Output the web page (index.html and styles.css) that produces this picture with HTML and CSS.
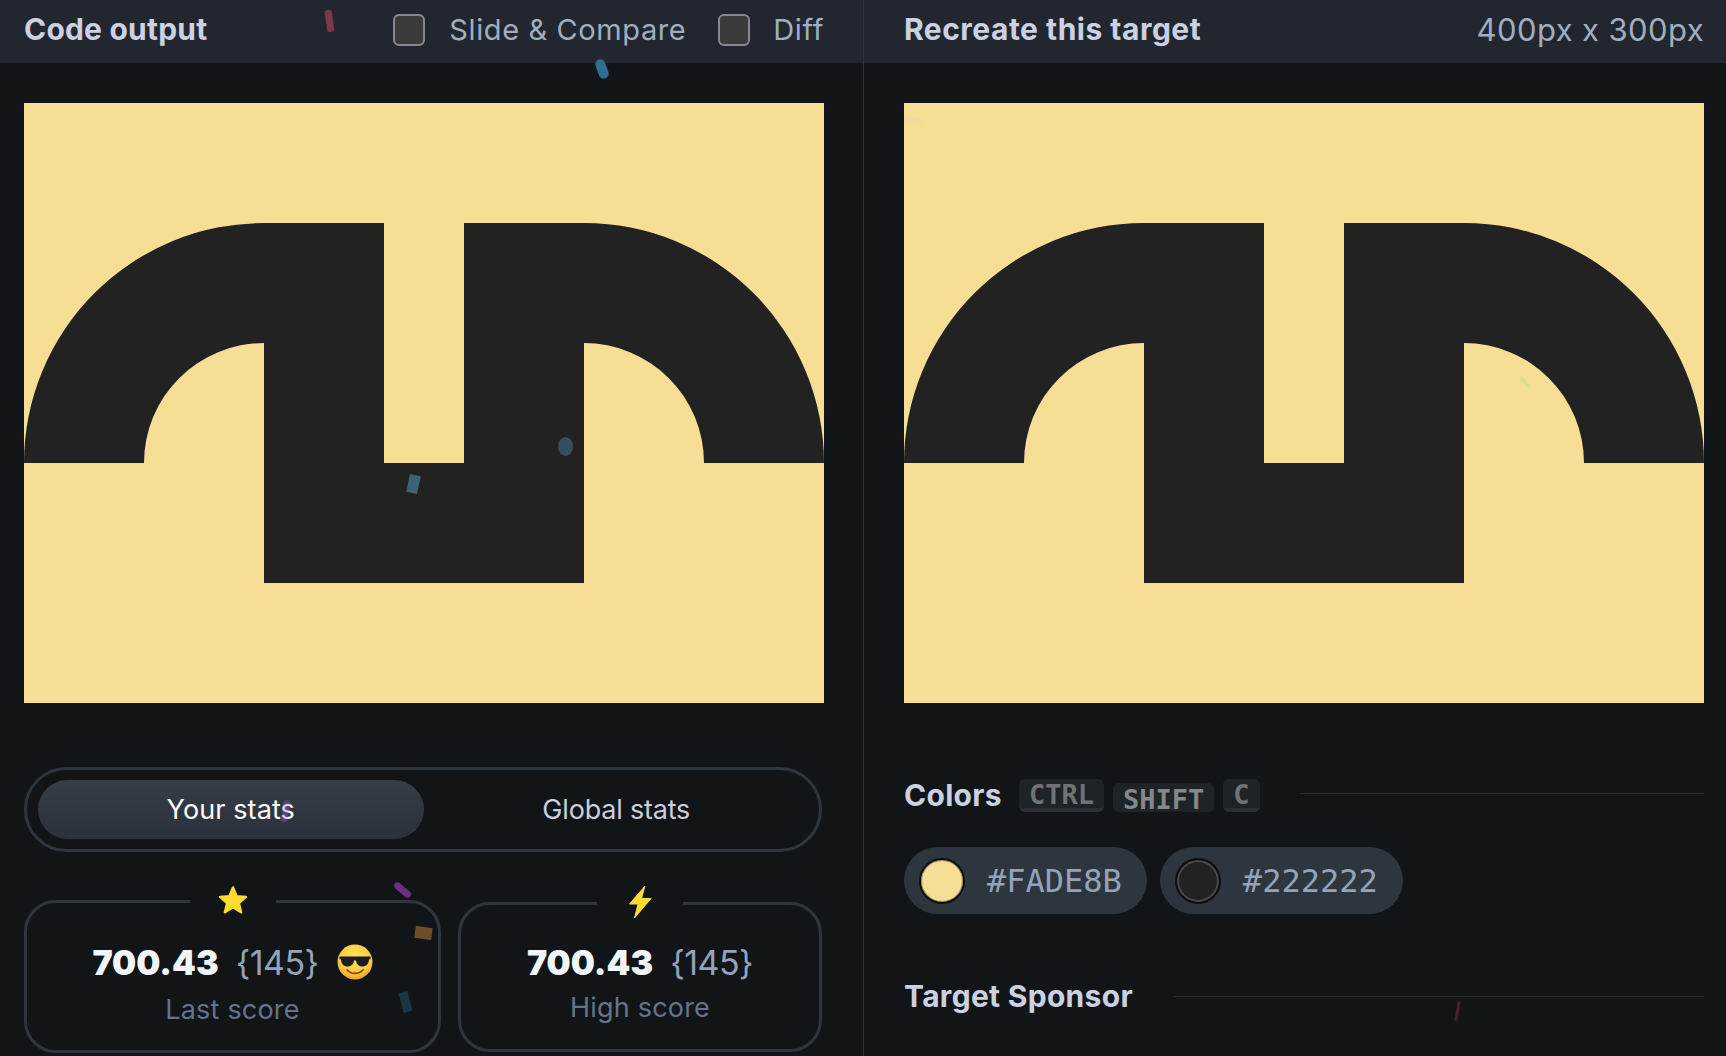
FILE: index.html
```html
<!DOCTYPE html>
<html lang="en">
<head>
    <meta charset="UTF-8">
    <meta name="viewport" content="width=device-width, initial-scale=1.0">
    <title>Code output</title>
    <link rel="stylesheet" href="styles.css">
</head>
<body>

    <div class="page">
        <section class="panel panel-left">
            <header class="bar">
                <h2 class="bar-title">Code output</h2>
                <div class="bar-options">
                    <span class="check"></span>
                    <span class="bar-label label-slide">Slide &amp; Compare</span>
                    <span class="check check-diff"></span>
                    <span class="bar-label label-diff">Diff</span>
                </div>
            </header>

            <div class="canvas">
                <svg viewBox="0 0 400 300" width="800" height="600">
                    <rect width="400" height="300" fill="#f6df94"/>
                    <path fill="#222222" d="M0 180A120 120 0 0 1 120 60H180V180H220V60H280A120 120 0 0 1 400 180H340A60 60 0 0 0 280 120V240H120V120A60 60 0 0 0 60 180Z"/>
                </svg>
            </div>

            <div class="toggle">
                <button class="tab tab-active">Your stats</button>
                <button class="tab">Global stats</button>
            </div>

            <div class="cards">
                <div class="card card-last">
                    <span class="card-icon">
                        <svg viewBox="0 0 32 32" width="32" height="32">
                            <path fill="#fcdb32" stroke="#fcdb32" stroke-width="2.5" stroke-linejoin="round" d="M16 3.5L19.6 12.2L29 12.9L21.8 19L24.1 28.2L16 23.2L7.9 28.2L10.2 19L3 12.9L12.4 12.2Z"/>
                        </svg>
                    </span>
                    <div class="score">
                        <strong class="score-value">700.43</strong>
                        <span class="score-count">{145}</span>
                        <svg class="emoji" viewBox="0 0 36 36" width="36" height="36">
                            <defs>
                                <radialGradient id="face" cx="50%" cy="35%" r="70%">
                                    <stop offset="0" stop-color="#ffe566"/>
                                    <stop offset="0.65" stop-color="#fcc93f"/>
                                    <stop offset="1" stop-color="#ee9a28"/>
                                </radialGradient>
                            </defs>
                            <circle cx="18" cy="18" r="17.5" fill="url(#face)"/>
                            <path fill="#1d1d1f" d="M2.5 12.5H33.5V15L32 15.5C31.5 20.5 29 22.5 25.5 22.5C21.5 22.5 19.5 20 19 16.5H17C16.5 20 14.5 22.5 10.5 22.5C7 22.5 4.5 20.5 4 15.5L2.5 15Z"/>
                            <path fill="none" stroke="#7c4a12" stroke-width="1.8" stroke-linecap="round" d="M10 26C14 30.5 22 30.5 26 26"/>
                        </svg>
                    </div>
                    <p class="score-label">Last score</p>
                </div>

                <div class="card card-high">
                    <span class="card-icon">
                        <svg viewBox="0 0 24 34" width="24" height="34">
                            <path fill="#fcdb32" stroke="#fcdb32" stroke-width="1" stroke-linejoin="round" d="M17 1L1.5 19H10L6.5 33L23 13.5H13.5Z"/>
                        </svg>
                    </span>
                    <div class="score">
                        <strong class="score-value">700.43</strong>
                        <span class="score-count">{145}</span>
                    </div>
                    <p class="score-label">High score</p>
                </div>
            </div>
        </section>

        <section class="panel panel-right">
            <header class="bar">
                <h2 class="bar-title">Recreate this target</h2>
                <span class="bar-label label-size">400px x 300px</span>
            </header>

            <div class="canvas">
                <svg viewBox="0 0 400 300" width="800" height="600">
                    <rect width="400" height="300" fill="#f6df94"/>
                    <path fill="#222222" d="M0 180A120 120 0 0 1 120 60H180V180H220V60H280A120 120 0 0 1 400 180H340A60 60 0 0 0 280 120V240H120V120A60 60 0 0 0 60 180Z"/>
                </svg>
            </div>

            <div class="heading heading-colors">
                <h3>Colors</h3>
                <div class="keys">
                    <kbd class="key">CTRL</kbd>
                    <kbd class="key key-shift">SHIFT</kbd>
                    <kbd class="key">C</kbd>
                </div>
                <span class="heading-line"></span>
            </div>

            <div class="chips">
                <div class="chip">
                    <span class="swatch swatch-yellow"></span>
                    <span class="chip-text">#FADE8B</span>
                </div>
                <div class="chip">
                    <span class="swatch swatch-dark"></span>
                    <span class="chip-text">#222222</span>
                </div>
            </div>

            <div class="heading heading-sponsor">
                <h3>Target Sponsor</h3>
                <span class="heading-line"></span>
            </div>
        </section>

        <!-- confetti -->
        <span class="bit bit-1"></span>
        <span class="bit bit-2"></span>
        <span class="bit bit-3"></span>
        <span class="bit bit-4"></span>
        <span class="bit bit-5"></span>
        <span class="bit bit-6"></span>
        <span class="bit bit-7"></span>
        <span class="bit bit-8"></span>
        <span class="bit bit-9"></span>
        <span class="bit bit-10"></span>
        <span class="bit bit-11"></span>
    </div>

</body>
</html>
```

FILE: styles.css
```css
* {
    box-sizing: border-box;
}
body {
    margin: 0;
    background-color: #111518;
    font-family: Inter, "Open Sans", sans-serif;
    overflow: hidden;
}
h2, h3, p {
    margin: 0;
}
.page {
    position: relative;
    display: grid;
    grid-template-columns: 863px 863px;
    height: 1056px;
    overflow: hidden;
}
.panel {
    min-width: 0;
}
.panel-right {
    border-left: 1px solid #2d343b;
}
.bar {
    display: flex;
    align-items: center;
    justify-content: space-between;
    height: 63px;
    padding: 0 22px 3px 24px;
    background-color: #22272f;
}
.panel-left .bar {
    padding-right: 39px;
}
.panel-right .bar {
    padding-left: 40px;
}
.bar-title {
    margin-bottom: 2px;
    color: #ccd1e2;
    font-size: 30px;
    font-weight: 700;
    letter-spacing: 0.2px;
}
.panel-right .bar-title {
    letter-spacing: 0.5px;
}
.bar-label {
    margin-bottom: 2px;
    color: #a0aec0;
    font-size: 29px;
    letter-spacing: 0.6px;
}
.label-size {
    font-size: 31px;
    letter-spacing: 0.4px;
}
.bar-options {
    display: flex;
    align-items: center;
}
.check {
    width: 32px;
    height: 32px;
    background-color: #3b3b3b;
    border: 2px solid #85898d;
    border-radius: 6px;
}
.label-slide {
    margin-left: 24px;
    margin-right: 32px;
}
.label-diff {
    margin-left: 23px;
}
.canvas {
    width: 800px;
    height: 600px;
    margin: 40px 0 0 24px;
}
.panel-right .canvas {
    margin-left: 40px;
}
.canvas svg {
    display: block;
}
.toggle {
    display: grid;
    grid-template-columns: 1fr 1fr;
    width: 798px;
    height: 85px;
    margin: 64px 0 0 24px;
    padding: 10px 10px 10px 11px;
    border: 3px solid #2d363f;
    border-radius: 43px;
}
.tab {
    border: none;
    border-radius: 30px;
    background: none;
    color: #c9cfdf;
    font-family: Inter, sans-serif;
    font-size: 27px;
    letter-spacing: -0.2px;
}
.tab-active {
    background: linear-gradient(#363d47, #2b313a);
    color: #ffffff;
    letter-spacing: 0.1px;
}
.cards {
    display: grid;
    grid-template-columns: 417px 364px;
    gap: 17px;
    align-items: start;
    margin: 48px 0 0 24px;
}
.card {
    position: relative;
    border: 3px solid #2d363f;
    border-radius: 32px;
    text-align: center;
}
.card-last {
    height: 153px;
    padding-top: 37px;
}
.card-high {
    height: 150px;
    margin-top: 2px;
    padding-top: 35px;
}
.card-icon {
    position: absolute;
    top: -19px;
    left: 50%;
    display: flex;
    justify-content: center;
    width: 86px;
    margin-left: -43px;
    background-color: #111518;
}
.card-high .card-icon {
    top: -20px;
}
.score {
    display: flex;
    align-items: center;
    justify-content: center;
    height: 44px;
}
.score-value {
    color: #f2f5fc;
    font-size: 34px;
    font-weight: 900;
}
.score-count {
    margin-left: 17px;
    color: #93a3b8;
    font-size: 34px;
    letter-spacing: -0.5px;
}
.emoji {
    margin-left: 18px;
}
.score-label {
    color: #64748b;
    font-size: 27px;
    letter-spacing: 0.2px;
}
.card-last .score-label {
    margin-top: 9px;
}
.card-high .score-label {
    margin-top: 7px;
}
.heading {
    display: flex;
    align-items: center;
    margin-left: 40px;
    margin-right: 22px;
}
.heading h3 {
    color: #ccd1e2;
    font-size: 30px;
    font-weight: 700;
    letter-spacing: 0.3px;
}
.heading-line {
    flex: 1;
    height: 1px;
    background-color: #262c32;
}
.heading-colors {
    height: 34px;
    margin-top: 75px;
}
.heading-colors .heading-line {
    margin-bottom: 3px;
}
.keys {
    display: flex;
    align-items: flex-end;
    gap: 9px;
    margin: 0 40px 0 17px;
}
.key {
    padding: 0 10px;
    height: 33px;
    background-color: #1e2327;
    border-bottom: 4px solid #2b2f35;
    border-radius: 6px;
    color: #6f7377;
    font-family: "DejaVu Sans Mono", monospace;
    font-size: 27px;
    font-weight: 700;
    line-height: 32px;
}
.key-shift {
    height: 29px;
    border-bottom: none;
    color: #85888b;
    line-height: 34px;
}
.chips {
    display: flex;
    gap: 13px;
    margin: 35px 0 0 40px;
}
.chip {
    display: flex;
    align-items: center;
    height: 67px;
    padding: 0 25px 0 15px;
    background-color: #2d363f;
    border-radius: 34px;
}
.swatch {
    width: 46px;
    height: 46px;
    border: 2px solid #0b0d0f;
    border-radius: 50%;
}
.swatch-yellow {
    background-color: #f6df94;
    box-shadow: inset 0 0 0 1px #a09060;
}
.swatch-dark {
    background-color: #222222;
    box-shadow: inset 0 0 0 2px #4a4a4a;
}
.chip-text {
    margin-left: 22px;
    color: #93a3b8;
    font-family: "DejaVu Sans Mono", monospace;
    font-size: 32px;
}
.heading-sponsor {
    height: 34px;
    margin-top: 65px;
}
.heading-sponsor .heading-line {
    margin-left: 41px;
}

.bit {
    position: absolute;
    filter: blur(0.5px);
}
.bit-1 { left: 326px; top: 10px; width: 7px; height: 22px; background: #7a3a4a; border-radius: 2px; transform: rotate(-8deg); }
.bit-2 { left: 597px; top: 59px; width: 10px; height: 20px; background: #2f6f8f; border-radius: 5px; transform: rotate(-20deg); }
.bit-3 { left: 408px; top: 475px; width: 11px; height: 18px; background: #3c6473; transform: rotate(12deg); }
.bit-4 { left: 558px; top: 437px; width: 15px; height: 19px; background: #33505c; border-radius: 50%; }
.bit-5 { left: 282px; top: 800px; width: 7px; height: 22px; background: rgba(150, 100, 220, 0.35); border-radius: 4px; transform: rotate(10deg); }
.bit-6 { left: 399px; top: 880px; width: 7px; height: 20px; background: #6f2c82; border-radius: 4px; transform: rotate(-50deg); }
.bit-7 { left: 415px; top: 927px; width: 17px; height: 12px; background: #6f4d2c; transform: rotate(8deg); }
.bit-8 { left: 401px; top: 992px; width: 9px; height: 20px; background: #1c3744; transform: rotate(-15deg); }
.bit-9 { left: 905px; top: 118px; width: 18px; height: 5px; background: #f6d9a0; border-radius: 3px; transform: rotate(10deg); }
.bit-10 { left: 1523px; top: 375px; width: 4px; height: 14px; background: #dbe08a; border-radius: 2px; transform: rotate(-40deg); }
.bit-11 { left: 1456px; top: 1001px; width: 3px; height: 20px; background: #4a1f2a; border-radius: 2px; transform: rotate(10deg); }
```
